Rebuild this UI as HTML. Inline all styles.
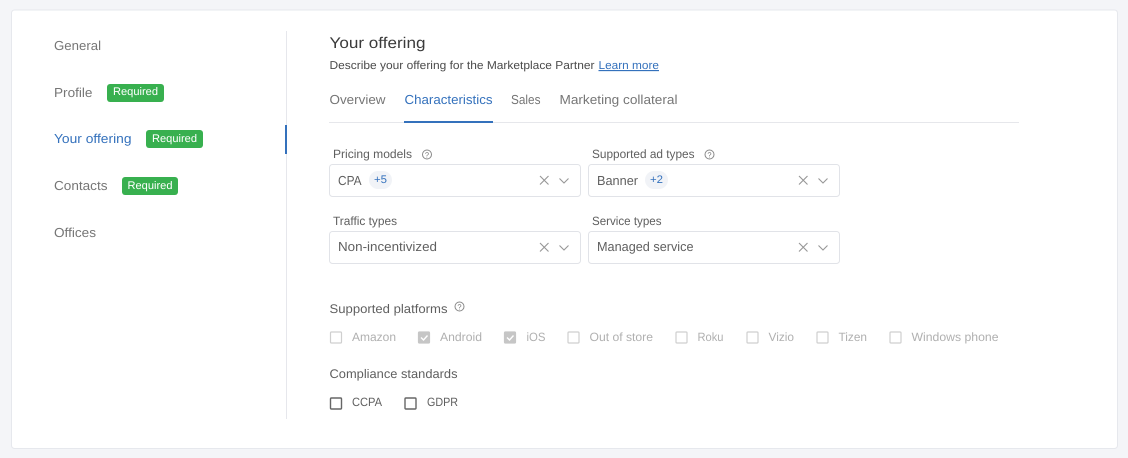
<!DOCTYPE html>
<html><head><meta charset="utf-8">
<style>
html,body{margin:0;padding:0;width:1128px;height:458px;overflow:hidden;background:#f4f5f8}
svg{display:block}
text{font-family:"Liberation Sans",sans-serif;font-size:13px;fill:#767676;text-rendering:geometricPrecision}
.d{fill:#3b3b3b}
.g{fill:#5f5f5f}
.l{fill:#b0b0b0;font-size:12px}
.b{fill:#3471bc}
.w{fill:#fff;font-size:11px}
.box{fill:#fff;stroke:#e1e3e8;stroke-width:1}
.x{stroke:#969696;stroke-width:1.1;fill:none}
.cb{fill:#fff;stroke:#cfcfcf;stroke-width:1.2}
.cc{fill:#fff;stroke:#666;stroke-width:1.4}
.cf{fill:#c6c6c6;stroke:#c6c6c6;stroke-width:1.2}
</style></head><body>
<svg width="1128" height="458" viewBox="0 0 1128 458" xmlns="http://www.w3.org/2000/svg">
<rect x="11.500" y="10" width="1106" height="438.500" rx="3" fill="#fff" stroke="#e6e8ed"/>
<!-- sidebar -->
<rect x="286" y="31" width="1" height="388" fill="#e6e7ec"/>
<rect x="285" y="125" width="2" height="29" fill="#3471bc"/>
<text x="54" y="50" textLength="47" lengthAdjust="spacingAndGlyphs">General</text>
<text x="54" y="97" textLength="38.500" lengthAdjust="spacingAndGlyphs">Profile</text>
<rect x="107" y="84" width="57" height="18" rx="3" fill="#38b04f"/>
<text class="w" x="113" y="95" textLength="45" lengthAdjust="spacingAndGlyphs">Required</text>
<text class="b" x="54" y="143" textLength="77.500" lengthAdjust="spacingAndGlyphs">Your offering</text>
<rect x="146" y="130" width="57" height="18" rx="3" fill="#38b04f"/>
<text class="w" x="152" y="142" textLength="45" lengthAdjust="spacingAndGlyphs">Required</text>
<text x="54" y="190" textLength="53.500" lengthAdjust="spacingAndGlyphs">Contacts</text>
<rect x="122" y="177" width="56" height="18" rx="3" fill="#38b04f"/>
<text class="w" x="127.500" y="189" textLength="45" lengthAdjust="spacingAndGlyphs">Required</text>
<text x="54" y="237" textLength="42" lengthAdjust="spacingAndGlyphs">Offices</text>
<!-- heading -->
<text class="d" x="329.500" y="48" style="font-size:15.500px" textLength="96" lengthAdjust="spacingAndGlyphs">Your offering</text>
<text class="d" x="329.500" y="69" style="font-size:11.500px;fill:#4a4a4a" textLength="265" lengthAdjust="spacingAndGlyphs">Describe your offering for the Marketplace Partner</text>
<text class="b" x="598.500" y="69" style="font-size:11.500px" textLength="60.500" lengthAdjust="spacingAndGlyphs" text-decoration="underline">Learn more</text>
<!-- tabs -->
<text x="329.500" y="104" textLength="56" lengthAdjust="spacingAndGlyphs">Overview</text>
<text class="b" x="404.500" y="104" textLength="88" lengthAdjust="spacingAndGlyphs">Characteristics</text>
<text x="511" y="104" textLength="29.500" lengthAdjust="spacingAndGlyphs">Sales</text>
<text x="559.500" y="104" textLength="118" lengthAdjust="spacingAndGlyphs">Marketing collateral</text>
<rect x="329" y="122" width="690" height="1" fill="#e6e7eb"/>
<rect x="404" y="121" width="89" height="2" fill="#3471bc"/>
<!-- labels -->
<text class="g" x="333" y="158" style="font-size:12px" textLength="79" lengthAdjust="spacingAndGlyphs">Pricing models</text>
<circle cx="427" cy="154.500" r="4.500" fill="none" stroke="#888" stroke-width="1"/>
<text x="427" y="157.500" text-anchor="middle" style="font-size:7.500px;fill:#777">?</text>
<text class="g" x="592" y="158" style="font-size:12px" textLength="102.500" lengthAdjust="spacingAndGlyphs">Supported ad types</text>
<circle cx="709.500" cy="154.500" r="4.500" fill="none" stroke="#888" stroke-width="1"/>
<text x="709.500" y="157.500" text-anchor="middle" style="font-size:7.500px;fill:#777">?</text>
<text class="g" x="333" y="225" style="font-size:12px" textLength="64" lengthAdjust="spacingAndGlyphs">Traffic types</text>
<text class="g" x="592" y="225" style="font-size:12px" textLength="69.500" lengthAdjust="spacingAndGlyphs">Service types</text>
<!-- selects -->
<rect class="box" x="329.500" y="164.500" width="251" height="32" rx="3"/>
<rect class="box" x="588.500" y="164.500" width="251" height="32" rx="3"/>
<rect class="box" x="329.500" y="231.500" width="251" height="32" rx="3"/>
<rect class="box" x="588.500" y="231.500" width="251" height="32" rx="3"/>
<text class="g" x="338" y="185" textLength="23.500" lengthAdjust="spacingAndGlyphs">CPA</text>
<rect x="369" y="171" width="23" height="18" rx="9" fill="#f1f3f7"/>
<text class="b" x="374" y="183" style="font-size:11px" textLength="13" lengthAdjust="spacingAndGlyphs">+5</text>
<text class="g" x="597" y="185" textLength="41" lengthAdjust="spacingAndGlyphs">Banner</text>
<rect x="645" y="171" width="23" height="18" rx="9" fill="#f1f3f7"/>
<text class="b" x="650" y="183" style="font-size:11px" textLength="13" lengthAdjust="spacingAndGlyphs">+2</text>
<text class="g" x="338" y="251" textLength="99" lengthAdjust="spacingAndGlyphs">Non-incentivized</text>
<text class="g" x="597" y="251" textLength="96.500" lengthAdjust="spacingAndGlyphs">Managed service</text>
<path class="x" d="M540 176l8.500 8.500M548.500 176l-8.500 8.500M559.500 178.500l4.500 4.500 4.500-4.500"/>
<path class="x" d="M799 176l8.500 8.500M807.500 176l-8.500 8.500M818.500 178.500l4.500 4.500 4.500-4.500"/>
<path class="x" d="M540 243l8.500 8.500M548.500 243l-8.500 8.500M559.500 245.500l4.500 4.500 4.500-4.500"/>
<path class="x" d="M799 243l8.500 8.500M807.500 243l-8.500 8.500M818.500 245.500l4.500 4.500 4.500-4.500"/>
<!-- platforms -->
<text class="g" x="329.500" y="313" style="font-size:12.500px" textLength="118" lengthAdjust="spacingAndGlyphs">Supported platforms</text>
<circle cx="459.500" cy="306.500" r="4.500" fill="none" stroke="#888" stroke-width="1"/>
<text x="459.500" y="309.500" text-anchor="middle" style="font-size:7.500px;fill:#777">?</text>
<rect class="cb" x="330.500" y="332" width="11" height="11" rx="1"/>
<text class="l" x="352" y="341" textLength="44" lengthAdjust="spacingAndGlyphs">Amazon</text>
<rect class="cf" x="418.500" y="332" width="11" height="11" rx="1"/>
<path d="M421 337.500l2.500 2.500 4-4.500" fill="none" stroke="#fff" stroke-width="1.400"/>
<text class="l" x="440" y="341" textLength="42" lengthAdjust="spacingAndGlyphs">Android</text>
<rect class="cf" x="504.500" y="332" width="11" height="11" rx="1"/>
<path d="M507 337.500l2.500 2.500 4-4.500" fill="none" stroke="#fff" stroke-width="1.400"/>
<text class="l" x="526.500" y="341" textLength="19" lengthAdjust="spacingAndGlyphs">iOS</text>
<rect class="cb" x="568" y="332" width="11" height="11" rx="1"/>
<text class="l" x="589.500" y="341" textLength="63.500" lengthAdjust="spacingAndGlyphs">Out of store</text>
<rect class="cb" x="676" y="332" width="11" height="11" rx="1"/>
<text class="l" x="697.500" y="341" textLength="26" lengthAdjust="spacingAndGlyphs">Roku</text>
<rect class="cb" x="747" y="332" width="11" height="11" rx="1"/>
<text class="l" x="768.500" y="341" textLength="25.500" lengthAdjust="spacingAndGlyphs">Vizio</text>
<rect class="cb" x="817" y="332" width="11" height="11" rx="1"/>
<text class="l" x="838.500" y="341" textLength="28.500" lengthAdjust="spacingAndGlyphs">Tizen</text>
<rect class="cb" x="890" y="332" width="11" height="11" rx="1"/>
<text class="l" x="911.500" y="341" textLength="87" lengthAdjust="spacingAndGlyphs">Windows phone</text>
<!-- compliance -->
<text class="g" x="329.500" y="378" style="font-size:12.500px" textLength="128" lengthAdjust="spacingAndGlyphs">Compliance standards</text>
<rect class="cc" x="330.500" y="398" width="11" height="11" rx="1"/>
<text class="g" x="352" y="406" style="font-size:12px" textLength="30" lengthAdjust="spacingAndGlyphs">CCPA</text>
<rect class="cc" x="405" y="398" width="11" height="11" rx="1"/>
<text class="g" x="427" y="406" style="font-size:12px" textLength="31" lengthAdjust="spacingAndGlyphs">GDPR</text>
</svg>
</body></html>
